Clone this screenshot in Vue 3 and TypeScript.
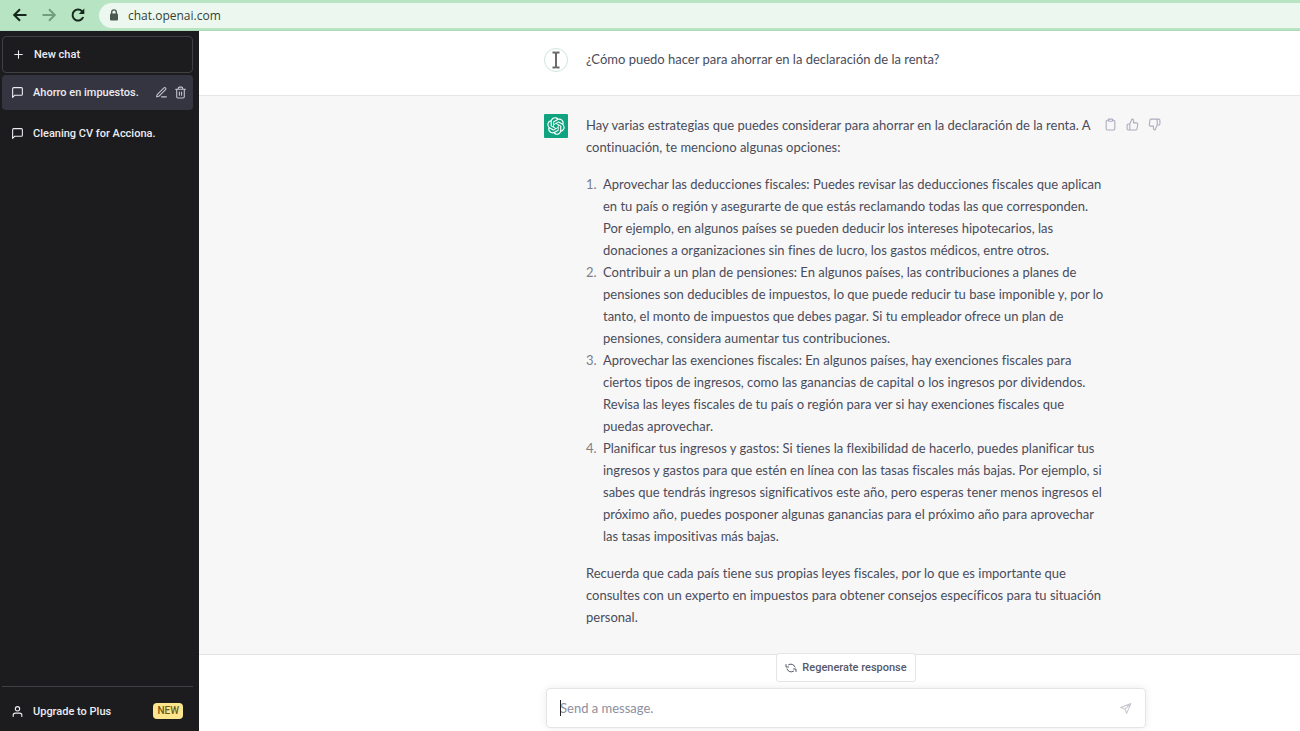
<script setup lang="ts">
import { ref } from 'vue'

interface Chat {
  title: string
  active: boolean
}

const chats: Chat[] = [
  { title: 'Ahorro en impuestos.', active: true },
  { title: 'Cleaning CV for Acciona.', active: false },
]

const question = '¿Cómo puedo hacer para ahorrar en la declaración de la renta?'

const intro = `Hay varias estrategias que puedes considerar para ahorrar en la declaración de la renta. A
continuación, te menciono algunas opciones:`

const strategies: string[] = [
  `Aprovechar las deducciones fiscales: Puedes revisar las deducciones fiscales que aplican
en tu país o región y asegurarte de que estás reclamando todas las que corresponden.
Por ejemplo, en algunos países se pueden deducir los intereses hipotecarios, las
donaciones a organizaciones sin fines de lucro, los gastos médicos, entre otros.`,
  `Contribuir a un plan de pensiones: En algunos países, las contribuciones a planes de
pensiones son deducibles de impuestos, lo que puede reducir tu base imponible y, por lo
tanto, el monto de impuestos que debes pagar. Si tu empleador ofrece un plan de
pensiones, considera aumentar tus contribuciones.`,
  `Aprovechar las exenciones fiscales: En algunos países, hay exenciones fiscales para
ciertos tipos de ingresos, como las ganancias de capital o los ingresos por dividendos.
Revisa las leyes fiscales de tu país o región para ver si hay exenciones fiscales que
puedas aprovechar.`,
  `Planificar tus ingresos y gastos: Si tienes la flexibilidad de hacerlo, puedes planificar tus
ingresos y gastos para que estén en línea con las tasas fiscales más bajas. Por ejemplo, si
sabes que tendrás ingresos significativos este año, pero esperas tener menos ingresos el
próximo año, puedes posponer algunas ganancias para el próximo año para aprovechar
las tasas impositivas más bajas.`,
]

const closing = `Recuerda que cada país tiene sus propias leyes fiscales, por lo que es importante que
consultes con un experto en impuestos para obtener consejos específicos para tu situación
personal.`

const address = ref('chat.openai.com')
const message = ref('')
</script>

<template>
  <div class="window">
    <header class="toolbar">
      <button class="nav" type="button" aria-label="Back">
        <svg viewBox="0 0 16 16"><path d="M14.500 8H2.500M8 2.200L2.200 8L8 13.800" /></svg>
      </button>
      <button class="nav dim" type="button" aria-label="Forward">
        <svg viewBox="0 0 16 16"><path d="M1.500 8H13.500M8 2.200L13.800 8L8 13.800" /></svg>
      </button>
      <button class="nav" type="button" aria-label="Reload">
        <svg viewBox="0 0 16 16"><path d="M13.200 10A5.500 5.500 0 1 1 12 4.200L13 5.300" /><path class="solid" d="M14.300 1.500V7H8.800Z" /></svg>
      </button>
      <div class="address">
        <svg class="lock" viewBox="0 0 10 12"><path class="shackle" d="M2.700 5V3.200a2.300 2.300 0 0 1 4.600 0V5" /><rect x="1" y="4.500" width="8" height="7" rx="1" /></svg>
        <input v-model="address" type="text" aria-label="Address" />
      </div>
    </header>

    <div class="body">
      <aside class="sidebar">
        <button class="new-chat" type="button">
          <svg class="icon" viewBox="0 0 24 24"><path d="M12 5v14M5 12h14" /></svg>
          New chat
        </button>
        <nav class="chats">
          <div v-for="chat in chats" :key="chat.title" class="chat" :class="{ active: chat.active }">
            <a href="#">
              <svg class="icon" viewBox="0 0 24 24"><path d="M21 15a2 2 0 0 1-2 2H7l-4 4V5a2 2 0 0 1 2-2h14a2 2 0 0 1 2 2z" /></svg>
              {{ chat.title }}
            </a>
            <template v-if="chat.active">
              <button type="button" aria-label="Rename chat">
                <svg class="icon" viewBox="0 0 24 24"><path d="M12 20h9M16.500 3.500a2.120 2.120 0 0 1 3 3L7 19l-4 1 1-4z" /></svg>
              </button>
              <button type="button" aria-label="Delete chat">
                <svg class="icon" viewBox="0 0 24 24"><path d="M3 6h18M19 6v14a2 2 0 0 1-2 2H7a2 2 0 0 1-2-2V6M8 6V4a2 2 0 0 1 2-2h4a2 2 0 0 1 2 2v2M10 11v6M14 11v6" /></svg>
              </button>
            </template>
          </div>
        </nav>
        <div class="account">
          <a href="#">
            <svg class="icon" viewBox="0 0 24 24"><path d="M20 21v-2a4 4 0 0 0-4-4H8a4 4 0 0 0-4 4v2" /><circle cx="12" cy="7" r="4" /></svg>
            Upgrade to Plus
            <span class="badge">NEW</span>
          </a>
        </div>
      </aside>

      <main class="main">
        <section class="turn user">
          <div class="column">
            <span class="avatar person">
              <svg viewBox="0 0 24 24"><path d="M8.500 4.500h2.500l1 1 1-1h2.500M12 5.500v13M8.500 19.500h2.500l1-1 1 1h2.500" /></svg>
            </span>
            <p>{{ question }}</p>
          </div>
        </section>

        <section class="turn assistant">
          <div class="column">
            <span class="avatar bot">
              <svg viewBox="0 0 41 41"><path d="M37.5324 16.8707C37.9808 15.5241 38.1363 14.0974 37.9886 12.6859C37.8409 11.2744 37.3934 9.91076 36.676 8.68622C35.6126 6.83404 33.9882 5.3676 32.0373 4.4985C30.0864 3.62941 27.9098 3.40259 25.8215 3.85078C24.8796 2.7893 23.7219 1.94125 22.4257 1.36341C21.1295 0.785575 19.7249 0.491269 18.3058 0.500197C16.1708 0.495044 14.0893 1.16803 12.3614 2.42214C10.6335 3.67624 9.34853 5.44666 8.6917 7.47815C7.30085 7.76286 5.98686 8.3414 4.8377 9.17505C3.68854 10.0087 2.73073 11.0782 2.02839 12.312C0.956464 14.1591 0.498905 16.2988 0.721698 18.4228C0.944492 20.5467 1.83612 22.5449 3.268 24.1293C2.81966 25.4759 2.66413 26.9026 2.81182 28.3141C2.95951 29.7256 3.40701 31.0892 4.12437 32.3138C5.18791 34.1659 6.8123 35.6322 8.76321 36.5013C10.7141 37.3704 12.8907 37.5973 14.9789 37.1492C15.9208 38.2107 17.0786 39.0587 18.3747 39.6366C19.6709 40.2144 21.0755 40.5087 22.4946 40.4998C24.6307 40.5054 26.7133 39.8321 28.4418 38.5772C30.1704 37.3223 31.4556 35.5506 32.1119 33.5179C33.5027 33.2332 34.8167 32.6547 35.9659 31.821C37.115 30.9874 38.0728 29.9178 38.7752 28.684C39.8458 26.8371 40.3023 24.6979 40.0789 22.5748C39.8556 20.4517 38.9639 18.4544 37.5324 16.8707ZM22.4978 37.8849C20.7443 37.8874 19.0459 37.2733 17.6994 36.1501C17.7601 36.117 17.8666 36.0586 17.936 36.0161L25.9004 31.4156C26.1003 31.3019 26.2663 31.137 26.3813 30.9378C26.4964 30.7386 26.5563 30.5124 26.5549 30.2825V19.0542L29.9213 20.998C29.9389 21.0068 29.9541 21.0198 29.9656 21.0359C29.977 21.052 29.9842 21.0707 29.9867 21.0902V30.3889C29.9842 32.375 29.1946 34.2791 27.7909 35.6841C26.3872 37.0892 24.4838 37.8806 22.4978 37.8849ZM6.39227 31.0064C5.51397 29.4888 5.19742 27.7107 5.49804 25.9832C5.55718 26.0187 5.66048 26.0818 5.73461 26.1244L13.699 30.7248C13.8975 30.8408 14.1233 30.902 14.3532 30.902C14.583 30.902 14.8088 30.8408 15.0073 30.7248L24.731 25.1103V28.9979C24.7321 29.0177 24.7283 29.0376 24.7199 29.0556C24.7115 29.0736 24.6988 29.0893 24.6829 29.1012L16.6317 33.7497C14.9096 34.7416 12.8643 35.0097 10.9447 34.4954C9.02506 33.9811 7.38785 32.7263 6.39227 31.0064ZM4.29707 13.6194C5.17156 12.0998 6.55279 10.9364 8.19885 10.3327C8.19885 10.4013 8.19491 10.5228 8.19491 10.6071V19.808C8.19351 20.0378 8.25334 20.2638 8.36823 20.4629C8.48312 20.6619 8.64893 20.8267 8.84863 20.9404L18.5723 26.5542L15.206 28.4979C15.1894 28.5089 15.1703 28.5155 15.1505 28.5173C15.1307 28.5191 15.1107 28.516 15.0924 28.5082L7.04046 23.8557C5.32135 22.8601 4.06716 21.2235 3.55289 19.3046C3.03862 17.3858 3.30624 15.3413 4.29707 13.6194ZM31.955 20.0556L22.2312 14.4411L25.5976 12.4981C25.6142 12.4872 25.6333 12.4805 25.6531 12.4787C25.6729 12.4769 25.6928 12.4801 25.7111 12.4879L33.7631 17.1364C34.9967 17.849 36.0017 18.8982 36.6606 20.1613C37.3194 21.4244 37.6047 22.849 37.4832 24.2684C37.3617 25.6878 36.8382 27.0432 35.9743 28.1759C35.1103 29.3086 33.9415 30.1717 32.6047 30.6641C32.6047 30.5947 32.6047 30.4733 32.6047 30.3889V21.188C32.6066 20.9586 32.5474 20.7328 32.4332 20.5338C32.319 20.3348 32.154 20.1698 31.955 20.0556ZM35.3055 15.0128C35.2464 14.9765 35.1431 14.9142 35.069 14.8717L27.1045 10.2712C26.906 10.1554 26.6803 10.0943 26.4504 10.0943C26.2206 10.0943 25.9948 10.1554 25.7963 10.2712L16.0726 15.8858V11.9982C16.0715 11.9783 16.0753 11.9585 16.0837 11.9405C16.0921 11.9225 16.1048 11.9068 16.1207 11.8949L24.1719 7.25025C25.4053 6.53903 26.8158 6.19376 28.2383 6.25482C29.6608 6.31589 31.0364 6.78077 32.2044 7.59508C33.3723 8.40939 34.2842 9.53945 34.8334 10.8531C35.3826 12.1667 35.5464 13.6095 35.3055 15.0128ZM14.2424 21.9419L10.8752 19.9981C10.8576 19.9893 10.8423 19.9763 10.8309 19.9602C10.8195 19.9441 10.8122 19.9254 10.8098 19.9058V10.6071C10.8107 9.18295 11.2173 7.78848 11.9819 6.58696C12.7466 5.38544 13.8377 4.42659 15.1275 3.82264C16.4173 3.21869 17.8524 2.99464 19.2649 3.1767C20.6775 3.35876 22.0089 3.93941 23.1034 4.85067C23.0427 4.88379 22.937 4.94215 22.8668 4.98473L14.9024 9.58517C14.7025 9.69878 14.5366 9.86356 14.4215 10.0626C14.3065 10.2616 14.2466 10.4877 14.2479 10.7175L14.2424 21.9419ZM16.071 17.9991L20.4018 15.4978L24.7325 17.9975V22.9985L20.4018 25.4983L16.071 22.9985V17.9991Z" /></svg>
            </span>
            <div class="answer">
              <p>{{ intro }}</p>
              <ol>
                <li v-for="(strategy, index) in strategies" :key="index">
                  <span class="number">{{ index + 1 }}.</span>
                  <span>{{ strategy }}</span>
                </li>
              </ol>
              <p>{{ closing }}</p>
            </div>
            <div class="actions">
              <button type="button" aria-label="Copy">
                <svg class="icon" viewBox="0 0 24 24"><path d="M16 4h2a2 2 0 0 1 2 2v14a2 2 0 0 1-2 2H6a2 2 0 0 1-2-2V6a2 2 0 0 1 2-2h2" /><rect x="8" y="2" width="8" height="4" rx="1" /></svg>
              </button>
              <button type="button" aria-label="Good response">
                <svg class="icon" viewBox="0 0 24 24"><path d="M14 9V5a3 3 0 0 0-3-3l-4 9v11h11.280a2 2 0 0 0 2-1.700l1.380-9a2 2 0 0 0-2-2.300zM7 22H4a2 2 0 0 1-2-2v-7a2 2 0 0 1 2-2h3" /></svg>
              </button>
              <button type="button" aria-label="Bad response">
                <svg class="icon" viewBox="0 0 24 24"><path d="M10 15v4a3 3 0 0 0 3 3l4-9V2H5.720a2 2 0 0 0-2 1.700l-1.380 9a2 2 0 0 0 2 2.300zM17 2h2.670A2.310 2.310 0 0 1 22 4v7a2.310 2.310 0 0 1-2.330 2H17" /></svg>
              </button>
            </div>
          </div>
        </section>

        <form class="composer" @submit.prevent>
          <button class="regenerate" type="button">
            <svg class="icon" viewBox="0 0 24 24"><path d="M2 5v5h5M22 19v-5h-5" /><path d="M7 5.500A8.500 8.500 0 0 1 20 10M17 18.500A8.500 8.500 0 0 1 4 14" /></svg>
            Regenerate response
          </button>
          <div class="field">
            <span class="caret"></span>
            <input v-model="message" type="text" placeholder="Send a message." aria-label="Send a message." />
            <button type="submit" aria-label="Send">
              <svg class="icon" viewBox="0 0 24 24"><path d="M22 3L14 21L11 13L3 10ZM22 3L11 13" /></svg>
            </button>
          </div>
        </form>
      </main>
    </div>
  </div>
</template>

<style>
html,
body {
  margin: 0;
}
</style>

<style scoped>
.window {
  display: flex;
  flex-direction: column;
  min-height: 100vh;
  font-family: Lato, 'Liberation Sans', sans-serif;
  font-size: 13px;
  font-variant-ligatures: none;
  color: #4a4c5a;
  background: #fff;
}

.window * {
  box-sizing: border-box;
}

button,
input {
  border: 0;
  padding: 0;
  background: none;
  font: inherit;
  color: inherit;
  outline: none;
}

button {
  display: flex;
  align-items: center;
}

a {
  color: inherit;
  text-decoration: none;
}

p,
ol {
  margin: 0;
  padding: 0;
}

.icon {
  flex: none;
  width: 13px;
  height: 13px;
  fill: none;
  stroke: currentColor;
  stroke-width: 2;
  stroke-linecap: round;
  stroke-linejoin: round;
}

.toolbar {
  display: flex;
  align-items: center;
  gap: 13px;
  height: 31px;
  padding-left: 12px;
  background: #b7e4c3;
  border-bottom: 1px solid #b0d9bc;
}

.nav svg {
  width: 16px;
  height: 16px;
  fill: none;
  stroke: #16271c;
  stroke-width: 2;
}

.nav.dim svg {
  stroke: #6f9f7f;
}

.nav .solid {
  fill: #16271c;
  stroke: none;
}

.address {
  display: flex;
  flex: 1;
  align-items: center;
  gap: 9px;
  height: 25px;
  padding-left: 10px;
  border-radius: 13px 0 0 13px;
  background: #ecf8ef;
}

.lock {
  width: 10px;
  height: 12px;
  fill: #4b5a50;
}

.shackle {
  fill: none;
  stroke: #4b5a50;
  stroke-width: 1.4;
}

.address input {
  flex: 1;
  font-family: 'Open Sans', 'Noto Sans', sans-serif;
  font-size: 12px;
  color: #333f38;
}

.body {
  display: flex;
  flex: 1;
}

.sidebar {
  display: flex;
  flex: none;
  flex-direction: column;
  width: 199px;
  padding: 5px 6px 0 2px;
  background: #1c1c1f;
  color: #ececf1;
  font-family: Roboto, 'Liberation Sans', sans-serif;
  font-size: 11px;
  font-weight: 500;
}

.new-chat {
  gap: 9px;
  height: 37px;
  padding-left: 9px;
  border: 1px solid #3f3f44;
  border-radius: 4px;
}

.chats {
  display: flex;
  flex: 1;
  flex-direction: column;
  gap: 6px;
  padding-top: 2px;
}

.chat {
  display: flex;
  align-items: center;
  gap: 6px;
  height: 35px;
  padding: 0 6px 0 9px;
  border-radius: 4px;
}

.chat.active {
  background: #343541;
}

.chat a {
  display: flex;
  flex: 1;
  align-items: center;
  gap: 9px;
}

.chat button {
  color: #c5c5d2;
}

.account {
  height: 45px;
  border-top: 1px solid #3f3f44;
}

.account a {
  display: flex;
  align-items: center;
  gap: 9px;
  height: 48px;
  padding: 0 10px 0 9px;
}

.badge {
  margin-left: auto;
  padding: 0 4px;
  border-radius: 4px;
  background: #fbe68e;
  color: #6b5a1d;
  font-size: 10px;
  line-height: 16px;
}

.main {
  display: flex;
  flex: 1;
  flex-direction: column;
  min-width: 0;
}

.turn {
  padding-left: 193px;
  line-height: 22px;
}

.column {
  display: flex;
  align-items: flex-start;
  width: 604px;
  margin: 0 auto;
}

.user {
  padding-top: 17px;
  padding-bottom: 23px;
  border-bottom: 1px solid #e6e6e8;
}

.assistant {
  flex: 1;
  padding-top: 18px;
  background: #f7f7f8;
  border-bottom: 1px solid #e3e3e5;
}

.avatar {
  display: flex;
  flex: none;
  align-items: center;
  justify-content: center;
  width: 24px;
  height: 24px;
  margin-right: 18px;
}

.person {
  border: 1px solid #cfe5da;
  border-radius: 50%;
}

.person svg {
  flex: none;
  width: 24px;
  height: 24px;
  fill: none;
  stroke: #6a6a6a;
  stroke-width: 2;
}

.bot {
  border-radius: 1px;
  background: #10a37f;
}

.bot svg {
  width: 18px;
  height: 18px;
  fill: #fff;
}

.answer {
  display: flex;
  flex: none;
  flex-direction: column;
  gap: 15px;
  width: 510px;
}

li {
  display: flex;
  list-style: none;
}

.answer p,
li span {
  white-space: pre;
}

.number {
  flex: none;
  width: 17px;
  color: #7c7e8a;
}

.actions {
  display: flex;
  flex: none;
  gap: 9px;
  margin-left: 8px;
  padding-top: 4px;
  color: #acacbe;
}

.composer {
  display: flex;
  flex-direction: column;
  align-items: center;
  gap: 6px;
  height: 76px;
  padding-left: 193px;
}

.regenerate {
  flex: none;
  gap: 5px;
  height: 29px;
  margin-top: -2px;
  padding: 0 8px;
  border: 1px solid #e5e5e8;
  border-radius: 3px;
  background: #fff;
  color: #565869;
  font-family: Roboto, 'Liberation Sans', sans-serif;
  font-size: 11px;
  font-weight: 500;
}

.regenerate .icon {
  width: 12px;
  height: 12px;
}

.field {
  position: relative;
  display: flex;
  align-items: center;
  width: 600px;
  height: 40px;
  padding: 0 13px;
  border: 1px solid #e5e5e8;
  border-radius: 4px;
  background: #fff;
  box-shadow: 0 0 8px rgba(0, 0, 0, 0.08);
}

.field input {
  flex: 1;
}

.field input::placeholder {
  color: #8e8ea0;
  opacity: 1;
}

.caret {
  position: absolute;
  left: 13px;
  width: 1px;
  height: 16px;
  background: #222;
}

.field .icon {
  color: #c8c8d0;
}
</style>
